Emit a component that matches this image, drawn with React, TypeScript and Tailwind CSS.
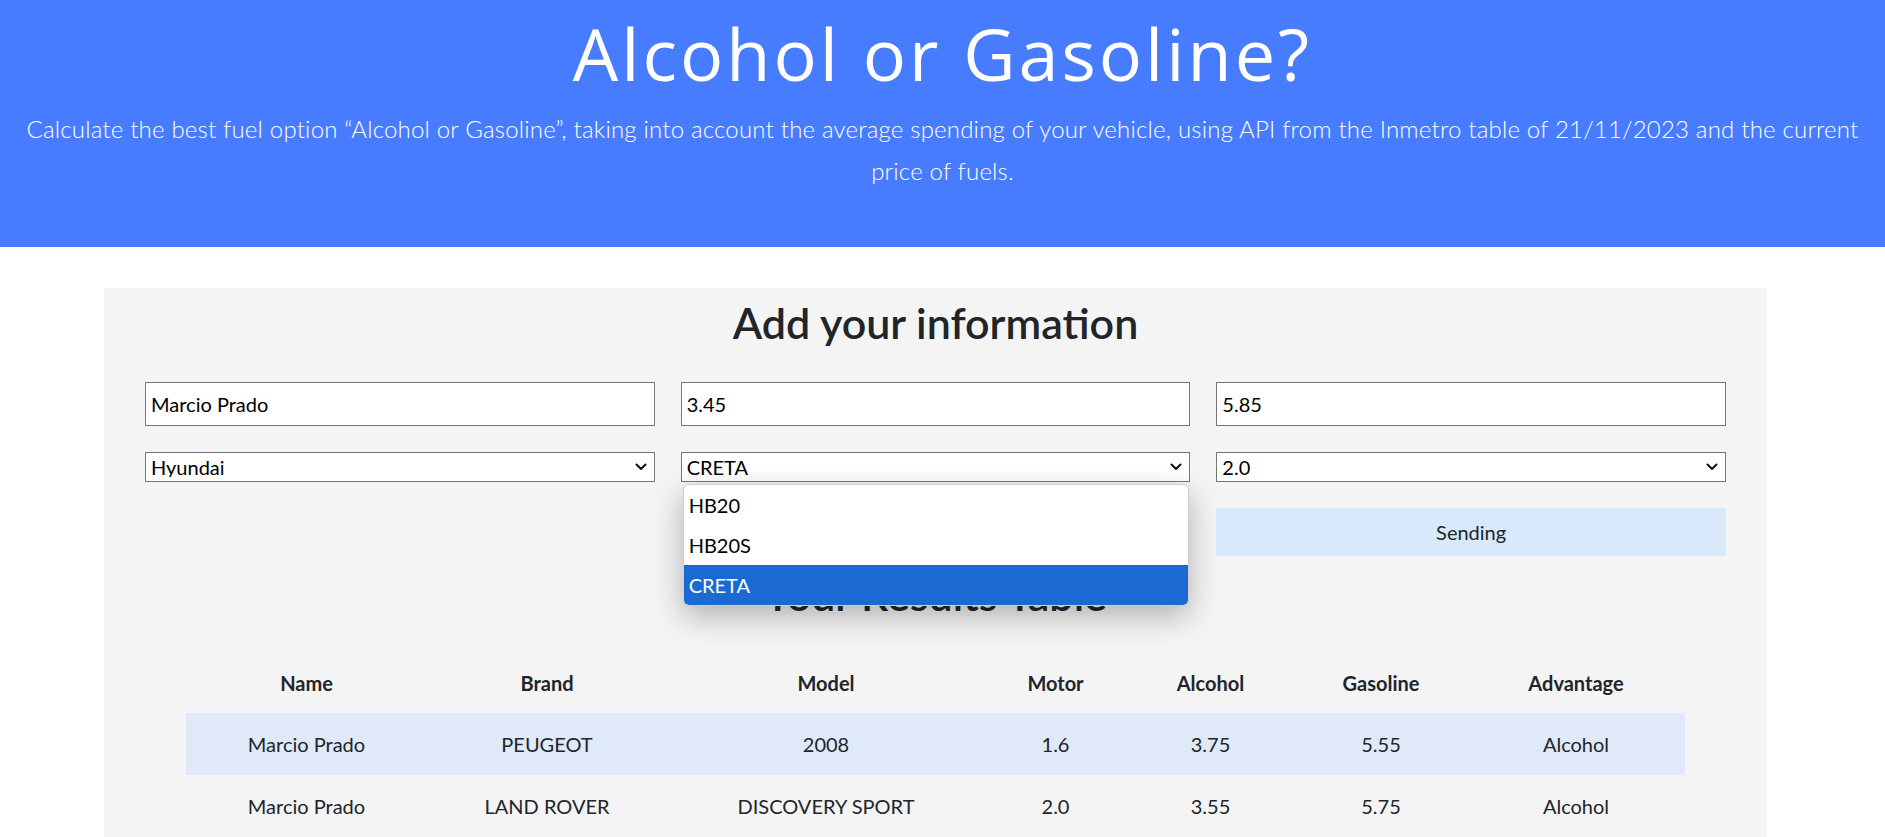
import { useState } from 'react';

const columns = [
  { label: 'Name', width: 'w-[241px]' },
  { label: 'Brand', width: 'w-[240px]' },
  { label: 'Model', width: 'w-[318px]' },
  { label: 'Motor', width: 'w-[141px]' },
  { label: 'Alcohol', width: 'w-[169px]' },
  { label: 'Gasoline', width: 'w-[172px]' },
  { label: 'Advantage', width: 'w-[218px]' },
];

const results = [
  ['Marcio Prado', 'PEUGEOT', '2008', '1.6', '3.75', '5.55', 'Alcohol'],
  ['Marcio Prado', 'LAND ROVER', 'DISCOVERY SPORT', '2.0', '3.55', '5.75', 'Alcohol'],
];

const models = ['HB20', 'HB20S', 'CRETA'];

function Chevron() {
  return (
    <svg
      className="pointer-events-none absolute right-[8px] top-1/2 -translate-y-1/2"
      width="12"
      height="8"
      viewBox="0 0 12 8"
      fill="none"
    >
      <path d="M1.5 1.5l4.5 4.5 4.5-4.5" stroke="#111" strokeWidth="2" strokeLinecap="round" strokeLinejoin="round" />
    </svg>
  );
}

function Select({ value, children }: { value: string; children?: React.ReactNode }) {
  return (
    <div className="relative">
      <select
        value={value}
        onChange={() => {}}
        className="block h-[30px] w-full appearance-none border border-[#767676] bg-white pl-[5px] text-[20px] leading-none text-black outline-none"
      >
        <option>{value}</option>
      </select>
      <Chevron />
      {children}
    </div>
  );
}

export default function App() {
  const [model, setModel] = useState('CRETA');

  return (
    <div className="min-h-screen bg-white font-['Lato',sans-serif] text-[#212529]">
      <header className="h-[247px] bg-[#487cff] pt-[17px] text-center text-white">
        <h1 className="font-['Open_Sans',sans-serif] text-[72px] leading-[72px] font-medium tracking-[3px]">
          Alcohol or Gasoline?
        </h1>
        <p className="mt-[19px] px-[12px] text-[24px] leading-[42px] font-light tracking-[0.2px]">
          Calculate the best fuel option “Alcohol or Gasoline”, taking into account the average spending of your
          vehicle, using API from the Inmetro table of 21/11/2023 and the current
          <br />
          price of fuels.
        </p>
      </header>

      <main className="pt-[41px]">
        <section className="ml-[104px] w-[1663px] bg-[#f4f4f4] px-[41px] pt-[11px] pb-[40px]">
          <h2 className="text-center text-[43px] leading-[48px] font-semibold">Add your information</h2>

          <form className="mt-[35px] grid grid-cols-3 gap-x-[26px] gap-y-[26px]" onSubmit={(e) => e.preventDefault()}>
            <input
              readOnly
              value="Marcio Prado"
              className="h-[44px] border border-[#767676] bg-white px-[5px] text-[20px] text-black outline-none"
            />
            <input
              readOnly
              value="3.45"
              className="h-[44px] border border-[#767676] bg-white px-[5px] text-[20px] text-black outline-none"
            />
            <input
              readOnly
              value="5.85"
              className="h-[44px] border border-[#767676] bg-white px-[5px] text-[20px] text-black outline-none"
            />

            <Select value="Hyundai" />
            <Select value={model}>
              {/* open native list */}
              <ul className="absolute left-[2px] right-[1px] top-[calc(100%+2px)] z-10 overflow-hidden rounded-[6px] border border-[#d0d0d0] bg-white text-[20px] text-black shadow-[0_10px_30px_rgba(0,0,0,0.28)]">
                {models.map((m) => (
                  <li
                    key={m}
                    onClick={() => setModel(m)}
                    className={
                      m === model
                        ? 'flex h-[40px] items-center bg-[#1b6ad3] pl-[5px] text-white'
                        : 'flex h-[40px] items-center pl-[5px]'
                    }
                  >
                    {m}
                  </li>
                ))}
              </ul>
            </Select>
            <Select value="2.0" />

            <button
              type="submit"
              className="col-start-3 h-[48px] bg-[#d8e9fb] text-[20px] text-[#212529]"
            >
              Sending
            </button>
          </form>

          <h2 className="mt-[15px] text-center text-[43px] leading-[48px] font-semibold">Your Results Table</h2>

          <table className="ml-[41px] mt-[33px] w-[1499px] table-fixed border-collapse text-center text-[20px]">
            <colgroup>
              {columns.map((c) => (
                <col key={c.label} className={c.width} />
              ))}
            </colgroup>
            <thead>
              <tr className="h-[61px]">
                {columns.map((c) => (
                  <th key={c.label} className="font-bold">
                    {c.label}
                  </th>
                ))}
              </tr>
            </thead>
            <tbody>
              {results.map((row, i) => (
                <tr key={i} className={i % 2 === 0 ? 'h-[62px] bg-[#e0e9f8]' : 'h-[62px]'}>
                  {row.map((cell, j) => (
                    <td key={j}>{cell}</td>
                  ))}
                </tr>
              ))}
            </tbody>
          </table>
        </section>
      </main>
    </div>
  );
}
